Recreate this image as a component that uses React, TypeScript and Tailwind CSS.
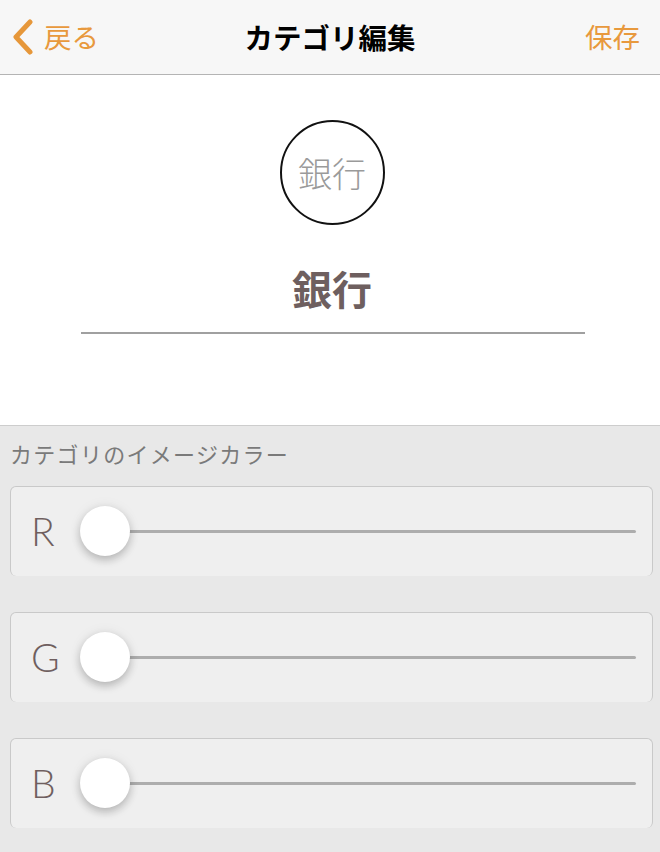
import React from "react";

const jp = { fontFamily: '"Noto Sans CJK JP", "Noto Sans", sans-serif' };

function SliderCard({ label }: { label: string }) {
  return (
    <div className="ml-[10px] mr-[7px] h-[90px] rounded-[6px] border-[1.5px] border-b-0 border-[#c9c9c9] bg-[#efefef] flex items-center">
      <div
        className="w-[60px] pl-[20px] text-[39px] font-light leading-none text-[#6f5f5f]"
        style={{ fontFamily: '"Lato", "Open Sans", sans-serif' }}
      >
        {label}
      </div>
      <div className="relative flex-1 mr-[16px] h-[50px] flex items-center">
        <div className="ml-[40px] h-[3px] flex-1 rounded-full bg-[#adadad]" />
        <div className="absolute left-[9px] top-[-1px] w-[50px] h-[50px] rounded-full bg-white shadow-[0_4px_8px_rgba(0,0,0,0.22),0_0_14px_rgba(0,0,0,0.06)]" />
      </div>
    </div>
  );
}

export default function App() {
  return (
    <div className="w-[660px] h-[852px] overflow-hidden bg-[#e8e8e8]" style={jp}>
      {/* Header */}
      <div className="h-[75px] bg-[#f7f7f7] border-b border-[#b4b4b4] flex items-center justify-between px-[12px]">
        <div className="flex items-center gap-[10px] w-[150px]">
          <svg width="22" height="36" viewBox="0 0 22 36" fill="none">
            <path d="M18 3 L4 18 L18 33" stroke="#e6973a" strokeWidth="5" strokeLinecap="round" strokeLinejoin="round" />
          </svg>
          <span className="text-[27.5px] text-[#e8993d] leading-none">戻る</span>
        </div>
        <div className="text-[28.5px] font-bold text-black leading-none">カテゴリ編集</div>
        <div className="w-[150px] flex justify-end pr-[8px]">
          <span className="text-[27.5px] text-[#e8993d] leading-none">保存</span>
        </div>
      </div>

      {/* Top white section */}
      <div className="h-[350px] bg-white flex flex-col items-center pt-[45px]">
        <div className="ml-[4px] w-[105px] h-[105px] rounded-full border-2 border-[#111] flex items-center justify-center">
          <span className="text-[34px] font-light text-[#9a9a9a] leading-none">銀行</span>
        </div>
        <div className="mt-[43px] ml-[4px] text-[40px] font-bold text-[#6e5f5f] leading-none">銀行</div>
        <div className="mt-[24px] w-[504px] h-[2px] bg-[#a0a0a0] ml-[6px]" />
      </div>

      {/* Color section */}
      <div className="border-t border-[#cdcdcd]">
        <div className="pl-[10px] pt-[13px] h-[60px] text-[22px] tracking-[1.3px] text-[#7a7a7a] leading-[28px]">
          カテゴリのイメージカラー
        </div>
        <div className="flex flex-col gap-[36px]">
          <SliderCard label="R" />
          <SliderCard label="G" />
          <SliderCard label="B" />
        </div>
      </div>
    </div>
  );
}
